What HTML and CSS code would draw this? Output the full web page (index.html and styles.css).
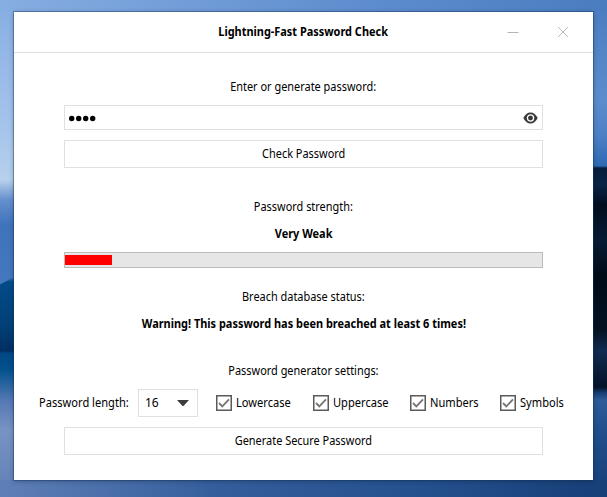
FILE: index.html
```
<!DOCTYPE html>
<html lang="en">
<head>
<meta charset="utf-8">
<title>Lightning-Fast Password Check</title>
<link rel="stylesheet" href="styles.css">
</head>
<body>
<main class="window">
  <header class="titlebar">
    <h1 class="title">Lightning-Fast Password Check</h1>
    <div class="controls">
      <svg width="12" height="12" viewBox="0 0 12 12"><path d="M.5 6.5h11" stroke="#b4b4b4"/></svg>
      <svg width="12" height="12" viewBox="0 0 12 12"><path d="M1 1l10 10M11 1L1 11" stroke="#a8a8a8" stroke-width=".8"/></svg>
    </div>
  </header>
  <section class="content">
    <p class="label enter"><span>Enter or generate password:</span></p>
    <div class="field">
      <svg class="dots" width="28" height="7" viewBox="0 0 28 7"><circle cx="2.7" cy="3.5" r="2.7"/><circle cx="9.7" cy="3.5" r="2.7"/><circle cx="16.7" cy="3.5" r="2.7"/><circle cx="23.7" cy="3.5" r="2.7"/></svg>
      <svg class="eye" width="15" height="12" viewBox="0 0 15 12"><path d="M.3 6C2 2.5 4.500 .5 7.500 .5S13 2.500 14.700 6C13 9.500 10.500 11.500 7.500 11.500S2 9.500 .3 6z" fill="#383838"/><circle cx="7.500" cy="6" r="3.100" fill="none" stroke="#fff" stroke-width="1.300"/></svg>
    </div>
    <button class="button check"><span>Check Password</span></button>
    <p class="label strength"><span>Password strength:</span></p>
    <p class="label result weak"><span>Very Weak</span></p>
    <div class="meter"><div class="meter-fill"></div></div>
    <p class="label breach"><span>Breach database status:</span></p>
    <p class="label result warning"><span>Warning! This password has been breached at least 6 times!</span></p>
    <p class="label generator"><span>Password generator settings:</span></p>
    <div class="options">
      <span class="length">Password length:</span>
      <div class="select"><span>16</span><svg width="12" height="6" viewBox="0 0 12 6"><path d="M0 0h12L6.500 6h-1z" fill="#3c3c3c"/></svg></div>
      <label class="option lower"><svg class="box" viewBox="0 0 16 16"><path d="M.75.75h14.500v14.500H.75z"/><path class="tick" d="M3 8l3.300 3.300L13 4.400"/></svg><span>Lowercase</span></label>
      <label class="option upper"><svg class="box" viewBox="0 0 16 16"><path d="M.75.75h14.500v14.500H.75z"/><path class="tick" d="M3 8l3.300 3.300L13 4.400"/></svg><span>Uppercase</span></label>
      <label class="option numbers"><svg class="box" viewBox="0 0 16 16"><path d="M.75.75h14.500v14.500H.75z"/><path class="tick" d="M3 8l3.300 3.300L13 4.400"/></svg><span>Numbers</span></label>
      <label class="option symbols"><svg class="box" viewBox="0 0 16 16"><path d="M.75.75h14.500v14.500H.75z"/><path class="tick" d="M3 8l3.300 3.300L13 4.400"/></svg><span>Symbols</span></label>
    </div>
    <button class="button generate"><span>Generate Secure Password</span></button>
  </section>
</main>
</body>
</html>
```
FILE: styles.css
```
* { box-sizing: border-box; }
html { height: 100%; }
body {
  margin: 0;
  height: 497px;
  padding: 12px 14px 17px;
  overflow: hidden;
  font: 12px/16px "Noto Sans", sans-serif;
  color: #000;
  background:
    linear-gradient(90deg, #87aee2, #618fcf 55%, #4a7dc0) 0 0 / 100% 12px no-repeat,
    linear-gradient(90deg, #5f7fb7, #355f9c 35%, #24508d 70%, #173f78) 0 480px / 100% 17px no-repeat,
    linear-gradient(152deg, #4378bc 0 7px, transparent 8px) 0 276px / 14px 10px no-repeat,
    linear-gradient(#86ade2 0, #a6c5ec 130px, #b7d0ed 180px, #658fcd 200px, #3f74bb 225px, #4378bc 277px, #024b88 282px, #014078 325px, #002f62 351px, #004783 353px, #03528e 370px, #5378b3 400px, #7893c3 430px, #5f7fb7 497px) 0 0 / 14px 100% no-repeat,
    linear-gradient(#4a7dc0 0, #5b8dcd 100px, #4d81c6 135px, #2e6ab2 166px, #071d3a 168px, #0a2345 185px, #020d1e 205px, #071b34 240px, #010b18 275px, #041223 330px, #102b50 351px, #041327 387px, #163f75 393px, #2e5c98 400px, #204f8b 430px, #173f78 497px) 593px 0 / 14px 100% no-repeat;
}
h1, p { margin: 0; font-size: 12px; line-height: 16px; }
.window {
  width: 579px;
  height: 468px;
  background: #fff;
  box-shadow: 0 0 0 1px rgba(20, 55, 95, .4), 0 1px 5px rgba(0, 20, 50, .35);
}
.titlebar {
  display: grid;
  grid-template-columns: 1fr 62px;
  height: 41px;
  border-bottom: 1px solid #dedede;
  padding: 12px 24px 0 86px;
}
.title { justify-self: center; white-space: nowrap; }
.controls { display: flex; justify-content: space-between; padding-top: 2px; }
.content { display: flex; flex-direction: column; padding: 26px 50px 0; }
.label { text-align: center; white-space: nowrap; }
.result, .title { font-weight: 700; }
/* condensed lettering */
.title, .label span, .button span { display: inline-block; transform: scaleX(.911); }
.length, .option span { transform: scaleX(.925); transform-origin: left; }
.field {
  display: flex;
  justify-content: space-between;
  height: 25px;
  margin-top: 10px;
  padding: 6px 4px 0 4px;
  border: 1px solid #e0e0e0;
}
.dots { margin-top: 3px; }
.button {
  height: 28px;
  padding: 0;
  border: 1px solid #e0e0e0;
  background: #fff;
  font: inherit;
  color: inherit;
}
.check { margin-top: 10px; }
.strength { margin-top: 31px; }
.weak { margin-top: 11px; }
.meter { height: 16px; margin-top: 10px; padding-top: 2px; border: 1px solid #bcbcbc; background: #e6e6e6; }
.meter-fill { width: 47px; height: 10px; background: #f00; }
.breach { margin-top: 21px; }
.warning { margin-top: 11px; }
.generator { margin-top: 31px; }
.options {
  display: grid;
  grid-template-columns: 99px 78px 97px 97px 90px 65px;
  align-items: center;
  height: 28px;
  margin: 10px -26px 0 -25px;
  white-space: nowrap;
}
.select {
  display: flex;
  align-items: center;
  justify-content: space-between;
  width: 60px;
  height: 28px;
  padding: 0 8px 0 6px;
  border: 1px solid #e0e0e0;
}
.option { display: flex; align-items: center; gap: 4px; }
.box { width: 16px; height: 16px; flex: none; fill: none; stroke: #5a5a5a; stroke-width: 1.5; }
.tick { stroke: #777; stroke-width: 1.9; }
.generate { margin-top: 10px; }
```
